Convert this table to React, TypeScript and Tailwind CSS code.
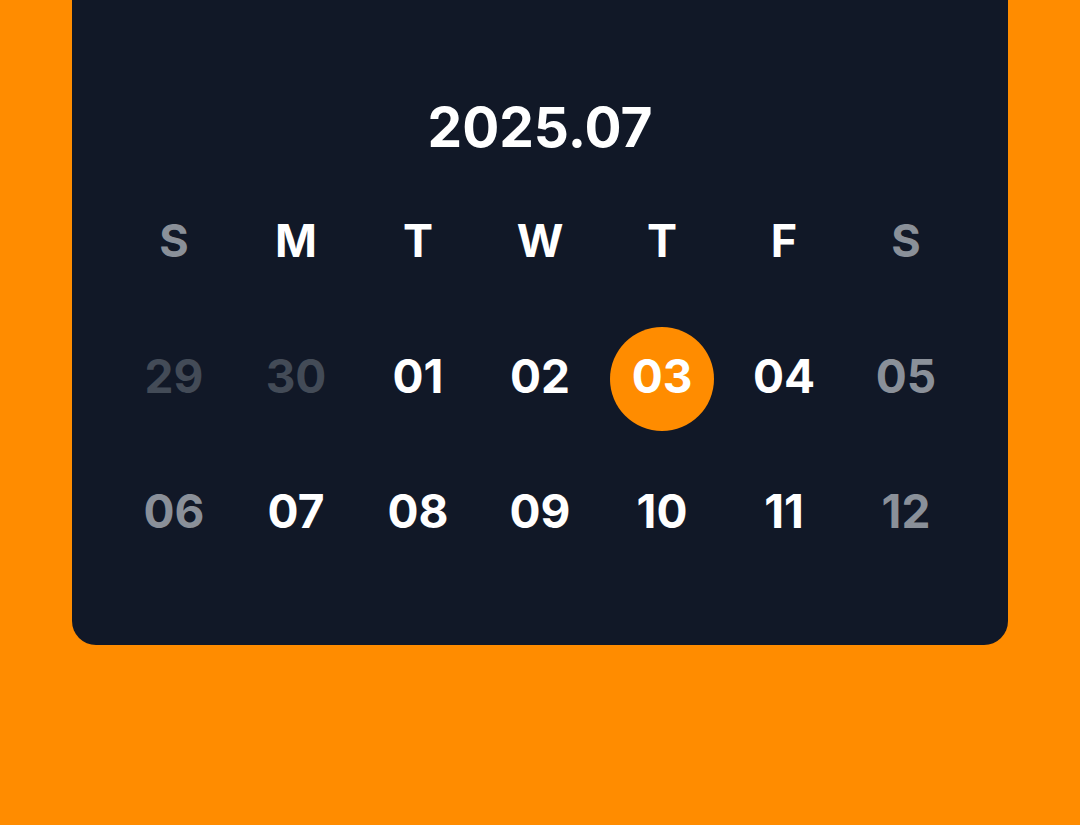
import { FC } from 'react';

type Day = { label: string; tone: 'past' | 'weekend' | 'normal' | 'today' };

const weekdays = [
  { label: 'S', weekend: true },
  { label: 'M', weekend: false },
  { label: 'T', weekend: false },
  { label: 'W', weekend: false },
  { label: 'T', weekend: false },
  { label: 'F', weekend: false },
  { label: 'S', weekend: true },
];

const weeks: Day[][] = [
  [
    { label: '29', tone: 'past' },
    { label: '30', tone: 'past' },
    { label: '01', tone: 'normal' },
    { label: '02', tone: 'normal' },
    { label: '03', tone: 'today' },
    { label: '04', tone: 'normal' },
    { label: '05', tone: 'weekend' },
  ],
  [
    { label: '06', tone: 'weekend' },
    { label: '07', tone: 'normal' },
    { label: '08', tone: 'normal' },
    { label: '09', tone: 'normal' },
    { label: '10', tone: 'normal' },
    { label: '11', tone: 'normal' },
    { label: '12', tone: 'weekend' },
  ],
];

const toneClass = {
  past: 'text-[#434b57]',
  weekend: 'text-[#8a9099]',
  normal: 'text-white',
  today: 'text-white',
};

const App: FC = () => {
  return (
    <div
      className="min-h-[825px] w-full bg-[#ff8c00]"
      style={{ fontFamily: 'Inter, "Noto Sans", sans-serif' }}
    >
      <div className="mx-[72px] rounded-b-3xl bg-[#111827] pt-[100px] pb-[79px]">
        <h1 className="text-center text-[55px] font-bold leading-none text-white">2025.07</h1>

        <div className="mx-auto mt-[63px] grid w-[854px] grid-cols-7">
          {weekdays.map((d, i) => (
            <div
              key={i}
              className={`text-center text-[45px] font-bold leading-none ${d.weekend ? 'text-[#8a9099]' : 'text-white'}`}
            >
              {d.label}
            </div>
          ))}
        </div>

        <div className="mx-auto mt-[64px] flex w-[854px] flex-col gap-[31px]">
          {weeks.map((week, w) => (
            <div key={w} className="grid grid-cols-7">
              {week.map((day) => (
                <div key={day.label} className="flex h-[104px] items-center justify-center">
                  <div
                    className={`flex h-[104px] w-[104px] items-center justify-center rounded-full pb-[6px] text-[46px] font-bold leading-none ${toneClass[day.tone]} ${day.tone === 'today' ? 'bg-[#ff8c00]' : ''}`}
                  >
                    {day.label}
                  </div>
                </div>
              ))}
            </div>
          ))}
        </div>
      </div>
    </div>
  );
};

export default App;
